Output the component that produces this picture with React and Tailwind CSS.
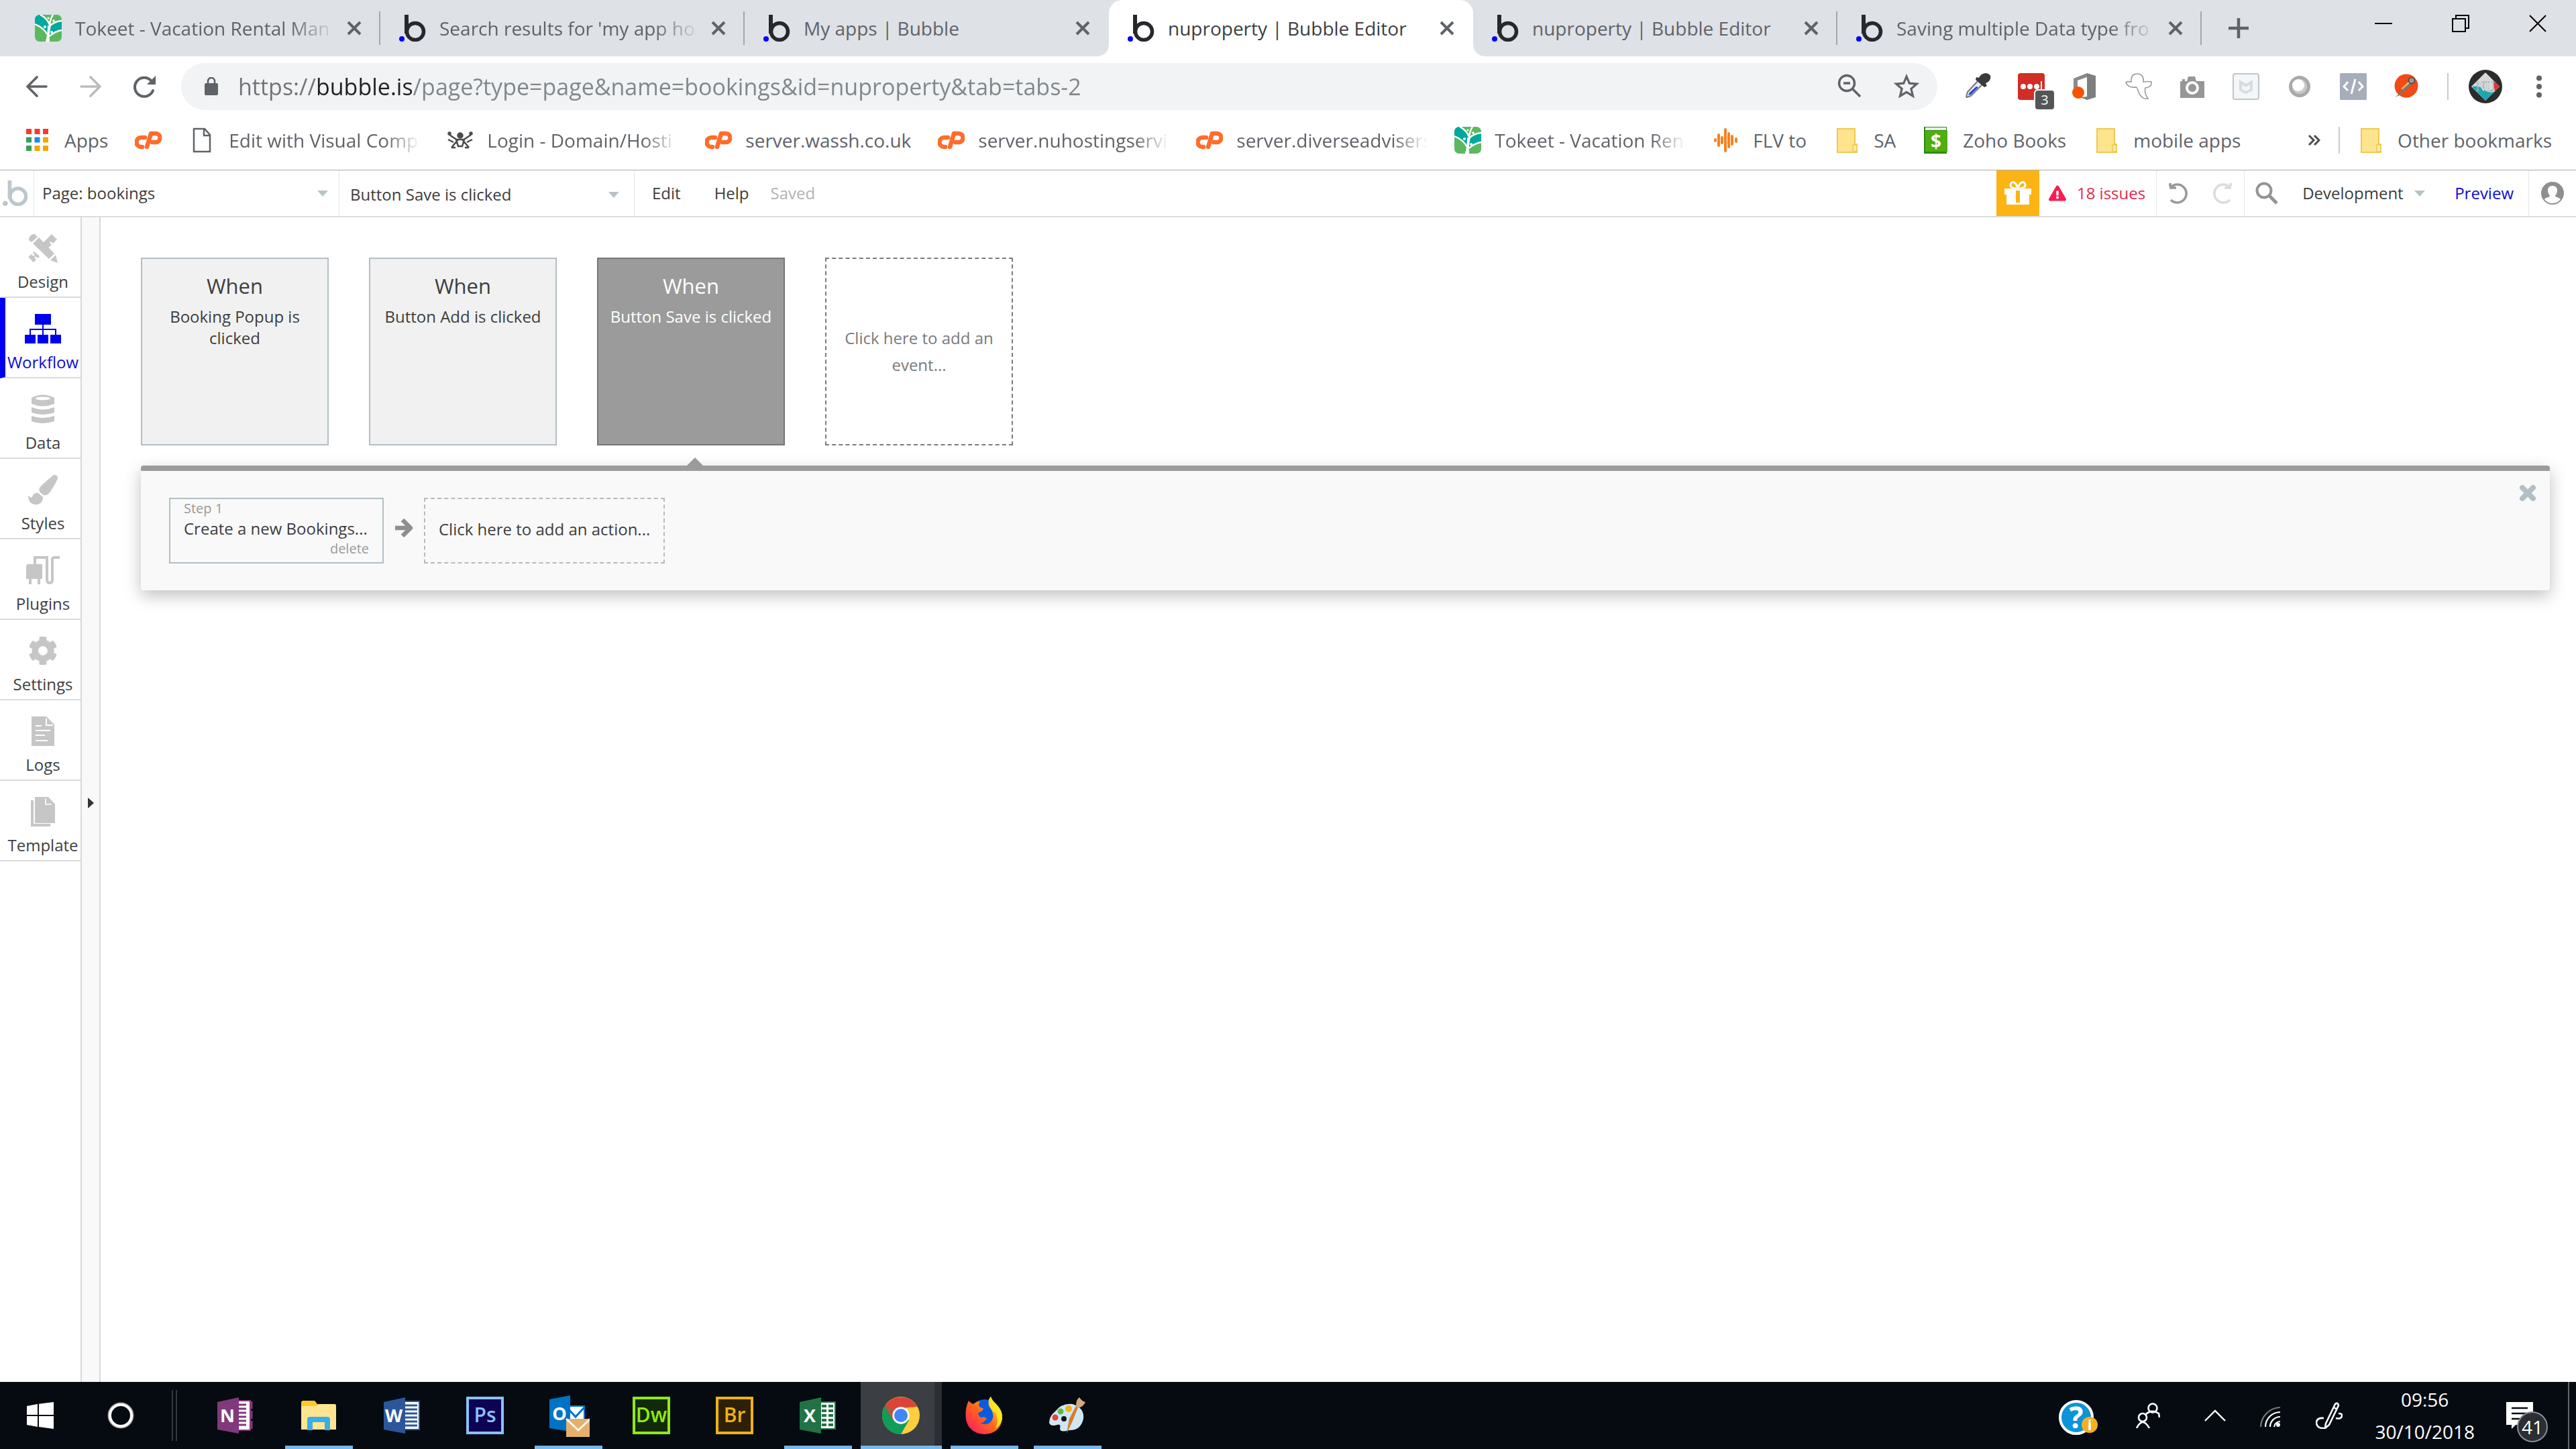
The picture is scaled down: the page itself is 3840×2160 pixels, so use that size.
import { FaCog, FaExclamationTriangle, FaPaintBrush } from "react-icons/fa";

const BubbleLogo = ({ className = "size-10", ink = "#27282b", dot = "#0000ff" }) => (
  <svg viewBox="0 0 40 40" className={className} aria-hidden="true">
    <rect x="8" y="0" width="6" height="28" fill={ink} />
    <circle cx="24" cy="25" r="12.5" fill="none" stroke={ink} strokeWidth="5.5" />
    <circle cx="4" cy="36" r="4" fill={dot} />
  </svg>
);

const TokeetLogo = () => (
  <svg viewBox="0 0 40 40" className="size-10" aria-hidden="true">
    <defs>
      <clipPath id="tokeet-clip">
        <rect width="40" height="40" rx="7" />
      </clipPath>
    </defs>
    <g clipPath="url(#tokeet-clip)">
      <rect width="40" height="40" fill="#5cb85f" />
      <path d="M0 14V4q4-4 8-4q10 6 13 14l-1 16Q10 18 0 14zM22 16Q29 10 40 9v14q-10 3-19 9z" fill="#00a99d" />
      <path d="M0 14Q13 19 19 30M8 0Q18 5 22 15Q23 6 27 0M22 17Q29 10 40 9M22 32Q29 25 40 23" fill="none" stroke="#fff" strokeWidth="2.4" />
      <path d="M16 40q3-11 3-24h5q-3 12-2 24z" fill="#fff" />
      <circle cx="15" cy="18" r="2" fill="#fff" />
      <circle cx="25" cy="26" r="2" fill="#fff" />
      <circle cx="20" cy="5" r="1.5" fill="#fff" />
      <circle cx="28" cy="9" r="1.8" fill="#fff" />
    </g>
  </svg>
);

const CpanelLogo = () => (
  <svg viewBox="0 0 40 40" className="size-10" aria-hidden="true" fill="none" stroke="#ff6c2c" strokeWidth="6.5" strokeLinecap="round" strokeLinejoin="round">
    <path d="M15 16h-5a7 7 0 0 0-1 14h2" />
    <path d="M18 30l6-20h7a6 6 0 0 1 0 13h-5" />
  </svg>
);

const PageIcon = () => (
  <svg viewBox="0 0 40 40" className="size-10" aria-hidden="true" fill="none" stroke="#5f6368" strokeWidth="2.5">
    <path d="M8 3h16l8 9v25H8zM23 3v10h9" />
  </svg>
);

const LoginIcon = () => (
  <svg viewBox="0 0 40 40" className="size-10" aria-hidden="true" fill="none" stroke="#4a4a4a" strokeWidth="2.5">
    <circle cx="20" cy="13" r="3.5" fill="#4a4a4a" />
    <circle cx="4" cy="10" r="1.5" />
    <circle cx="36" cy="10" r="1.5" />
    <path d="M4 12l12 8-9 11M36 12l-12 8 9 11M14 19h12l-3 10h-6zM2 19l8 4M38 19l-8 4M7 31h6M27 31h6" />
  </svg>
);

const AppsIcon = () => {
  const colors = ["#f43b2f", "#f43b2f", "#f43b2f", "#34a05a", "#1e88f5", "#f4a500", "#34a05a", "#f4a500", "#f4a500"];
  return (
    <svg viewBox="0 0 40 40" className="size-10" aria-hidden="true">
      {colors.map((color, i) => (
        <rect key={i} x={3 + (i % 3) * 12.5} y={3 + Math.floor(i / 3) * 12.5} width="8" height="8" fill={color} />
      ))}
    </svg>
  );
};

const FlvIcon = () => (
  <svg viewBox="0 0 40 40" className="size-10" aria-hidden="true" stroke="#f58220" strokeWidth="4" strokeLinecap="round">
    <path d="M4 19v2M9 12v16M14 16v8M19 4v32M24 10v20M29 14v12M35 18v4" />
  </svg>
);

const FolderIcon = () => (
  <svg viewBox="0 0 40 40" className="size-10" aria-hidden="true">
    <path d="M6 3h26v23h3v12H6z" fill="#ffe48f" stroke="#eec94f" strokeWidth="2" />
    <path d="M29 37V27h6v10z" fill="#ffe9a6" stroke="#eec94f" strokeWidth="1.5" />
  </svg>
);

const ZohoIcon = () => (
  <svg viewBox="0 0 40 40" className="size-10" aria-hidden="true">
    <path d="M2 0h34v40H2z" fill="#2c8a12" />
    <path d="M4 1h31v4H4z" fill="#e5f5dc" />
    <path d="M4 6h33v31H4z" fill="#4fae10" />
    <text x="20" y="32" textAnchor="middle" fontSize="28" fontWeight="700" fill="#fff" className="font-['Open_Sans',sans-serif]">$</text>
  </svg>
);

const Caret = () => (
  <svg viewBox="0 0 16 9" className="pointer-events-none h-[9px] w-4 shrink-0" aria-hidden="true">
    <path d="M0 0h16L8 9z" fill="#b8c3c8" />
  </svg>
);

const tabs = [
  { title: "Tokeet - Vacation Rental Man", icon: "tokeet", faded: true, separator: true },
  { title: "Search results for 'my app ho", faded: true, separator: true },
  { title: "My apps | Bubble" },
  { title: "nuproperty | Bubble Editor", active: true },
  { title: "nuproperty | Bubble Editor", separator: true },
  { title: "Saving multiple Data type fro", faded: true, separator: true },
];

const Tab = ({ tab }) => (
  <div className={`relative flex h-[84px] min-w-0 max-w-[543px] flex-1 items-center pl-7 ${tab.active ? "rounded-t-[20px] bg-white text-[#3c4043]" : "text-[#5f6368]"}`}>
    {tab.active && (
      <>
        <svg viewBox="0 0 20 20" className="absolute -left-5 bottom-0 size-5" aria-hidden="true">
          <path d="M20 0v20H0Q20 20 20 0z" fill="#fff" />
        </svg>
        <svg viewBox="0 0 20 20" className="absolute -right-5 bottom-0 size-5" aria-hidden="true">
          <path d="M0 0v20h20Q0 20 0 0z" fill="#fff" />
        </svg>
      </>
    )}
    <button className="flex min-w-0 flex-1 items-center gap-5 text-left">
      <span className="shrink-0">{tab.icon === "tokeet" ? <TokeetLogo /> : <BubbleLogo />}</span>
      <span className={`flex-1 whitespace-nowrap ${tab.faded ? "[mask-image:linear-gradient(to_right,black_82%,transparent)]" : ""}`}>{tab.title}</span>
    </button>
    <button aria-label="Close tab" className="ml-4 shrink-0">
      <svg viewBox="0 0 22 22" className="size-[22px]" stroke="#5f6368" strokeWidth="4">
        <path d="M2 2l18 18M20 2L2 20" />
      </svg>
    </button>
    <span className={`ml-[26px] h-[50px] w-0.5 shrink-0 ${tab.separator ? "bg-[#a4a7ab]" : ""}`} />
  </div>
);

const TabStrip = () => (
  <div className="flex items-center bg-[#dee1e6] pl-6">
    {tabs.map((tab, i) => (
      <Tab key={i} tab={tab} />
    ))}
    <button aria-label="New tab" className="ml-10 shrink-0">
      <svg viewBox="0 0 30 30" className="size-[30px]" stroke="#5f6368" strokeWidth="4.5">
        <path d="M15 0v30M0 15h30" />
      </svg>
    </button>
    <div className="ml-auto flex h-[70px] self-start">
      <button aria-label="Minimize" className="flex w-[115px] items-center justify-center">
        <svg viewBox="0 0 26 26" className="size-[26px]"><path d="M0 12h26v2H0z" /></svg>
      </button>
      <button aria-label="Restore" className="flex w-[115px] items-center justify-center">
        <svg viewBox="0 0 26 26" className="size-[26px]" fill="none" stroke="#000" strokeWidth="2">
          <path d="M1 6h19v19H1zM6 6V1h19v19h-5" />
        </svg>
      </button>
      <button aria-label="Close window" className="flex w-[115px] items-center justify-center">
        <svg viewBox="0 0 26 26" className="size-[26px]" stroke="#000" strokeWidth="2">
          <path d="M1 1l24 24M25 1L1 25" />
        </svg>
      </button>
    </div>
  </div>
);

const extensions = [
  {
    name: "Color picker",
    icon: (
      <svg viewBox="0 0 40 40" className="size-10">
        <path d="M3 35l2-7 16-17 6 6-17 17-6 2z" fill="#e8eaf0" stroke="#777" strokeWidth="2" />
        <path d="M6 33l2-4 10-9 3 1-11 11z" fill="#2747d0" />
        <path d="M18 6l4 1q3-7 11-7 8 2 6 8-1 5-7 7l2 4-4 2L17 10z" fill="#3a3a3a" />
      </svg>
    ),
  },
  {
    name: "LastPass",
    badge: "3",
    icon: (
      <svg viewBox="0 0 40 40" className="size-10">
        <rect width="40" height="40" rx="4" fill="#d32d27" />
        <circle cx="8" cy="20" r="4" fill="#fff" />
        <circle cx="18" cy="20" r="4" fill="#fff" />
        <circle cx="28" cy="20" r="4" fill="#fff" />
        <path d="M34 12h2v16h-2z" fill="#fff" />
      </svg>
    ),
  },
  {
    name: "Office",
    icon: (
      <svg viewBox="0 0 40 40" className="size-10">
        <path d="M3 8l20-8v6L9 11v12H3z" fill="#8b8b8b" />
        <path d="M23 0l13 4v32l-13 4-10-4 10-1z" fill="#7f7f7f" />
        <circle cx="10" cy="29" r="9" fill="#f65400" />
      </svg>
    ),
  },
  {
    name: "Ghostery",
    icon: (
      <svg viewBox="0 0 40 40" className="size-10" fill="#fff" stroke="#999" strokeWidth="1.6">
        <path d="M9 13Q8 1 18 1q10 0 9 12 8-1 12 0 1 8-9 9-2 8 4 16-10 2-15-12-1-5-3-5Q4 22 1 14q3-2 8-1z" />
      </svg>
    ),
  },
  {
    name: "Screenshot",
    icon: (
      <svg viewBox="0 0 40 40" className="size-10">
        <path d="M2 12h3V9h4v3h3l2-7h10l2 7h12v25H2z" fill="#969696" />
        <circle cx="20" cy="22" r="8" fill="#969696" stroke="#fff" strokeWidth="4" />
      </svg>
    ),
  },
  {
    name: "McAfee",
    icon: (
      <svg viewBox="0 0 40 40" className="size-10">
        <rect x="1" y="1" width="38" height="38" rx="3" fill="#f4f6f7" stroke="#bcc6cb" strokeWidth="2" />
        <path d="M10 10l10 6 10-6v16l-10 5-10-5zM14 17v7l6 3 6-3v-7l-6 4z" fill="#d5dcdf" fillRule="evenodd" />
      </svg>
    ),
  },
  {
    name: "Ring",
    icon: (
      <svg viewBox="0 0 40 40" className="size-10">
        <circle cx="20" cy="20" r="16" fill="#a9a9a9" />
        <circle cx="20" cy="20" r="11" fill="#c9c9c9" />
        <circle cx="18" cy="18" r="9" fill="#fff" />
      </svg>
    ),
  },
  {
    name: "Source",
    icon: (
      <svg viewBox="0 0 40 40" className="size-10" fill="none" stroke="#fff" strokeWidth="3">
        <rect width="40" height="40" rx="2" fill="#a6adbb" stroke="none" />
        <path d="M12 13l-6 7 6 6M28 13l6 7-6 6M23 9l-6 22" />
      </svg>
    ),
  },
  {
    name: "Postman",
    icon: (
      <svg viewBox="0 0 40 40" className="size-10">
        <circle cx="19" cy="19" r="17.5" fill="#f04a16" />
        <path d="M2 36l4-3L25 13l3 3L9 33z" fill="#777" />
        <path d="M11 23l13-12 2 2-12 11z" fill="#ffb25c" />
        <circle cx="27" cy="11" r="4.5" fill="#999" stroke="#444" strokeWidth="1.5" />
      </svg>
    ),
  },
];

const Toolbar = () => (
  <div className="flex h-[90px] items-center pl-[15px] pr-[50px]">
    <button aria-label="Back" className="flex size-20 items-center justify-center">
      <svg viewBox="0 0 32 32" className="size-8" fill="none" stroke="#5f6368" strokeWidth="3.6" strokeLinecap="round">
        <path d="M16 2L2 16l14 14M2 16h28" />
      </svg>
    </button>
    <button aria-label="Forward" className="flex size-20 items-center justify-center">
      <svg viewBox="0 0 32 32" className="size-8" fill="none" stroke="#babcbe" strokeWidth="3.6" strokeLinecap="round">
        <path d="M16 2l14 14-14 14M30 16H2" />
      </svg>
    </button>
    <button aria-label="Reload" className="flex size-20 items-center justify-center">
      <svg viewBox="0 0 34 34" className="size-[34px]" fill="none" stroke="#5f6368" strokeWidth="4" strokeLinecap="round">
        <path d="M27 8A14 14 0 1 0 30 23" />
        <path d="M34 1v13H21z" fill="#5f6368" stroke="none" />
      </svg>
    </button>
    <div className="ml-[15px] flex h-[70px] flex-1 items-center rounded-full bg-[#f1f3f4] pl-[35px] pr-[26px]">
      <svg viewBox="0 0 20 28" className="mr-[30px] h-7 w-5" aria-hidden="true">
        <rect y="9" width="20" height="18" rx="2" fill="#5f6368" />
        <path d="M5 10V6a5 5 0 0 1 10 0v4" fill="none" stroke="#5f6368" strokeWidth="2.6" />
      </svg>
      <input
        aria-label="Address"
        defaultValue="https://bubble.is/page?type=page&name=bookings&id=nuproperty&tab=tabs-2"
        className="min-w-0 flex-1 bg-[linear-gradient(to_right,#6f7377_116px,#202124_116px,#202124_261px,#80868b_261px)] bg-clip-text text-[34px] text-transparent outline-none"
      />
      <button aria-label="Zoom">
        <svg viewBox="0 0 40 40" className="size-10" fill="none" stroke="#5f6368" strokeWidth="3.4">
          <circle cx="16" cy="15" r="11.5" />
          <path d="M25 24l11 11M11 15h10" />
        </svg>
      </button>
      <button aria-label="Bookmark" className="ml-[45px]">
        <svg viewBox="0 0 40 40" className="size-10" fill="none" stroke="#5f6368" strokeWidth="3.2">
          <path d="M20 5l4.300 10.200 11 .9-8.400 7.200 2.600 10.800L20 28.300l-9.500 5.800 2.600-10.800-8.400-7.200 11-.9z" />
        </svg>
      </button>
    </div>
    <div className="ml-10 flex items-center gap-10">
      {extensions.map((ext) => (
        <button key={ext.name} aria-label={ext.name} className="relative">
          {ext.icon}
          {ext.badge && (
            <span className="absolute -bottom-4 -right-4 flex h-8 w-8 items-center justify-center rounded-md border-2 border-white bg-[#555] text-[20px] text-white">{ext.badge}</span>
          )}
        </button>
      ))}
      <span className="h-10 w-0.5 bg-[#c9cbce]" />
    </div>
    <button aria-label="Profile" className="ml-[30px]">
      <svg viewBox="0 0 50 50" className="size-[50px]">
        <circle cx="25" cy="25" r="25" fill="#2c2c2c" />
        <path d="M25 4l21 21-21 21L4 25z" fill="#d8d8d8" />
        <path d="M5 25q12-2 20 6 9 6 17-1L25 46z" fill="#1ea7b0" />
        <path d="M37 16l9 9-7 7q-2-8-2-16z" fill="#e0343c" />
        <text x="25" y="32" textAnchor="middle" fontSize="20" fill="#fff" stroke="#8a9aa0" strokeWidth="0.6" className="font-['Liberation_Serif',serif]">NU</text>
      </svg>
    </button>
    <button aria-label="Menu" className="ml-[50px]">
      <svg viewBox="0 0 10 34" className="h-[34px] w-2.5" fill="#5f6368">
        <circle cx="5" cy="4.500" r="4" />
        <circle cx="5" cy="17" r="4" />
        <circle cx="5" cy="29.500" r="4" />
      </svg>
    </button>
  </div>
);

const bookmarks = [
  { label: "Apps", icon: <AppsIcon /> },
  { icon: <CpanelLogo /> },
  { label: "Edit with Visual Comp", icon: <PageIcon />, faded: true },
  { label: "Login - Domain/Hosti", icon: <LoginIcon />, faded: true },
  { label: "server.wassh.co.uk", icon: <CpanelLogo /> },
  { label: "server.nuhostingservi", icon: <CpanelLogo />, faded: true },
  { label: "server.diverseadvisers", icon: <CpanelLogo />, faded: true },
  { label: "Tokeet - Vacation Ren", icon: <TokeetLogo />, faded: true },
  { label: "FLV to", icon: <FlvIcon /> },
  { label: "SA", icon: <FolderIcon /> },
  { label: "Zoho Books", icon: <ZohoIcon /> },
  { label: "mobile apps", icon: <FolderIcon /> },
];

const BookmarksBar = () => (
  <div className="flex h-20 items-center border-b border-[#a9abae] pb-[9px] pl-9 pr-9 text-[#5f6368]">
    <div className="flex items-center gap-10">
      {bookmarks.map((mark, i) => (
        <a key={i} href="#" aria-label={mark.label ?? "cPanel"} className="flex items-center gap-5 whitespace-nowrap">
          {mark.icon}
          {mark.label && (
            <span className={mark.faded ? "w-[285px] [mask-image:linear-gradient(to_right,black_82%,transparent)]" : ""}>{mark.label}</span>
          )}
        </a>
      ))}
    </div>
    <button aria-label="More bookmarks" className="ml-auto">
      <svg viewBox="0 0 18 16" className="h-4 w-[18px]" fill="none" stroke="#4a4d51" strokeWidth="3">
        <path d="M1 1l7 7-7 7M9 1l7 7-7 7" />
      </svg>
    </button>
    <span className="ml-[27px] h-10 w-0.5 bg-[#c9cbce]" />
    <a href="#" className="ml-[26px] flex items-center gap-5 whitespace-nowrap">
      <FolderIcon />
      Other bookmarks
    </a>
  </div>
);

const EditorBar = () => (
  <header className="flex h-[70px] items-stretch border-b-2 border-[#dcdcdc] text-[24px] text-[#3d3d3d]">
    <a href="#" aria-label="Bubble home" className="flex w-[51px] items-center justify-center border-r border-[#e3e7e9] pr-1">
      <BubbleLogo className="size-[38px]" ink="#bcc6cb" dot="#bcc6cb" />
    </a>
    <div className="flex w-[455px] items-center border-r border-[#e3e7e9] pl-3 pr-4">
      <select aria-label="Page" className="min-w-0 flex-1 appearance-none bg-transparent outline-none">
        <option>Page: bookings</option>
      </select>
      <Caret />
    </div>
    <div className="flex w-[440px] items-center border-r border-[#e3e7e9] pl-4 pr-[22px] pt-1">
      <select aria-label="Event" className="min-w-0 flex-1 appearance-none bg-transparent outline-none">
        <option>Button Save is clicked</option>
      </select>
      <Caret />
    </div>
    <button className="ml-[26px]">Edit</button>
    <button className="ml-[50px]">Help</button>
    <span className="ml-8 self-center text-[#b2b2b2]">Saved</span>
    <button aria-label="Gift" className="ml-auto flex w-16 items-center justify-center bg-[#fcb415]">
      <svg viewBox="0 0 40 38" className="h-[38px] w-10" fill="#fff">
        <path d="M0 12h17v24H3V21H0zM23 12h17v9h-3v15H23z" />
        <path d="M17 12h6v3h-6zM17 33h6v3h-6z" />
        <path d="M20 12Q8 12 9 6q2-6 7-2 3 3 4 8 1-5 4-8 5-4 7 2 1 6-11 6z" fill="none" stroke="#fff" strokeWidth="3" />
      </svg>
    </button>
    <button className="flex items-center gap-4 border-r border-[#e3e7e9] pl-[14px] pr-4 text-[#e4284f]">
      <FaExclamationTriangle className="size-[26px] text-[#fb1c50]" />
      18 issues
    </button>
    <div className="flex w-[131px] items-center justify-center gap-8 border-r border-[#e3e7e9]">
      <button aria-label="Undo">
        <svg viewBox="0 0 32 32" className="size-8" fill="none" stroke="#999" strokeWidth="3.600">
          <path d="M3 6v-5M4 7A13.500 13.500 0 1 1 4 26M2 8h10" />
        </svg>
      </button>
      <button aria-label="Redo">
        <svg viewBox="0 0 32 32" className="size-8" fill="none" stroke="#dcdcdc" strokeWidth="3.600">
          <path d="M29 6v-5M28 7A13.500 13.500 0 1 0 28 26M30 8H20" />
        </svg>
      </button>
    </div>
    <button aria-label="Search" className="ml-4 self-center">
      <svg viewBox="0 0 34 34" className="size-[34px]" fill="none" stroke="#949494" strokeWidth="4">
        <circle cx="13" cy="13" r="10.500" />
        <path d="M21 21l11 11" strokeWidth="5" />
      </svg>
    </button>
    <div className="ml-9 flex items-center gap-4">
      <select aria-label="Version" className="appearance-none bg-transparent outline-none">
        <option>Development</option>
      </select>
      <Caret />
    </div>
    <a href="#" className="ml-11 flex items-center border-r border-[#e3e7e9] pr-[22px] text-[#0c0cd8]">Preview</a>
    <button aria-label="Account" className="px-[18px]">
      <svg viewBox="0 0 34 34" className="size-[34px]">
        <circle cx="17" cy="17" r="17" fill="#8f8f8f" />
        <path d="M17 6c5 0 7 3 7 7 0 4-2 6-3 8 0 2 6 2 8 5-3 4-7 6-12 6s-9-2-12-6c2-3 8-3 8-5-1-2-3-4-3-8 0-4 2-7 7-7z" fill="#fff" />
      </svg>
    </button>
  </header>
);

const navItems = [
  {
    label: "Design",
    icon: (
      <svg viewBox="0 0 44 44" className="size-11" fill="#c6c6c6">
        <path d="M35 1l8 8-6 6-3-3-2 2 3 3-6 5-8-7zM9 27l8 7-3 3-3-3-2 2 3 3-4 4-8-8 5-4 3 3 2-2-3-3z" />
        <path d="M1 8q0-3 3-5 3-3 6-2l4 4-9 8-4-3zM16 6l23 24-8 8L7 15zM41 32l3 12-11-4z" />
      </svg>
    ),
  },
  {
    label: "Workflow",
    active: true,
    icon: (
      <svg viewBox="0 0 54 44" className="h-11 w-[54px]" fill="#0000f0">
        <path d="M15 0h24v16H15zM0 31h16v13H0zM19 31h16v13H19zM38 31h16v13H38z" />
        <path d="M27 16v15M8 31v-8h38v8" fill="none" stroke="#0000f0" strokeWidth="2" />
      </svg>
    ),
  },
  {
    label: "Data",
    icon: (
      <svg viewBox="0 0 36 44" className="h-11 w-9" fill="#c6c6c6">
        <path d="M1 5q17-9 34 0v9q-17 7-34 0zM1 19q17 7 34 0v8q-17 6-34 0zM1 32q17 6 34 0v8q-17 6-34 0z" />
        <ellipse cx="18" cy="6" rx="11" ry="2.600" fill="#fff" />
      </svg>
    ),
  },
  { label: "Styles", icon: <FaPaintBrush className="size-11" /> },
  {
    label: "Plugins",
    icon: (
      <svg viewBox="0 0 52 44" className="h-11 w-[52px]" fill="#c6c6c6">
        <path d="M3 13h22v22h-3v8h-4v-8H9v8H5v-8H1V15z" />
        <path d="M14 14V3h18v33q0 5 4 5t4-5V6q0-3 4-3h7" fill="none" stroke="#c6c6c6" strokeWidth="4" />
      </svg>
    ),
  },
  { label: "Settings", icon: <FaCog className="size-11" /> },
  {
    label: "Logs",
    icon: (
      <svg viewBox="0 0 34 44" className="h-11 w-[34px]">
        <path d="M0 0h22l12 12v32H0z" fill="#c6c6c6" />
        <path d="M22 3v10h10M6 14h9M6 21h22M6 28h14M6 36h18" fill="none" stroke="#fff" strokeWidth="2" />
      </svg>
    ),
  },
  {
    label: "Template",
    icon: (
      <svg viewBox="0 0 36 44" className="h-11 w-9">
        <path d="M0 5h4v35h25v4H0zM6 0h20l10 11v28H6z" fill="#c6c6c6" />
        <path d="M22 2v9h9" fill="none" stroke="#fff" strokeWidth="1.600" />
      </svg>
    ),
  },
];

const Sidebar = () => (
  <nav className="w-[122px] shrink-0 border-r-2 border-[#d9d9d9] text-[24px] leading-8">
    {navItems.map((item) => (
      <button
        key={item.label}
        className={`flex h-[120px] w-full flex-col items-center border-b-2 border-[#dadada] pt-6 ${item.active ? "border-l-8 border-l-[#0000f0] text-[#0c0cd8]" : "pl-2 text-[#404040]"}`}
      >
        <span className={item.active ? "" : "text-[#c6c6c6]"}>{item.icon}</span>
        <span className="mt-3">{item.label}</span>
      </button>
    ))}
  </nav>
);

const events = [
  { name: "Booking Popup is clicked" },
  { name: "Button Add is clicked" },
  { name: "Button Save is clicked", active: true },
];

const EventCard = ({ event }) => (
  <button
    className={`flex size-[280px] flex-col items-center border-2 px-4 pt-[18px] ${event.active ? "border-[#757575] bg-[#9b9b9b] text-white" : "border-[#b2bfc3] bg-[#f1f1f1] text-[#3d3d3d]"}`}
  >
    <span className="text-[31px] leading-[44px]">When</span>
    <span className="mt-2 leading-8">{event.name}</span>
  </button>
);

const Workflow = () => (
  <main className="min-w-0 flex-1 pb-10 pl-[60px] pr-[39px] pt-[60px] text-[24px]">
    <div className="flex gap-[60px]">
      {events.map((event) => (
        <EventCard key={event.name} event={event} />
      ))}
      <button className="size-[280px] border-2 border-dashed border-[#7b7b7b] px-5 leading-10 text-[#7b7b7b]">Click here to add an event...</button>
    </div>
    <section className="relative mt-[30px] flex items-start rounded-sm border-t-8 border-[#9b9b9b] bg-[#f9f9f9] pb-10 pl-[42px] pr-5 pt-10 shadow-[0_8px_24px_rgba(0,0,0,0.25)]">
      <svg viewBox="0 0 26 13" className="absolute -top-5 left-[813px] h-[13px] w-[26px]" aria-hidden="true">
        <path d="M0 13L13 0l13 13z" fill="#9b9b9b" />
      </svg>
      <div className="flex w-[320px] flex-col border-2 border-[#b2bfc3] px-5 pb-1.5">
        <span className="text-[20px] leading-7 text-[#999]">Step 1</span>
        <button className="text-left leading-8 whitespace-nowrap text-[#3d3d3d]">Create a new Bookings...</button>
        <button className="self-end text-[20px] leading-7 text-[#999]">delete</button>
      </div>
      <svg viewBox="0 0 28 30" className="mx-4 mt-[30px] h-[30px] w-7" fill="none" stroke="#8f8f8f" strokeWidth="6.500" aria-hidden="true">
        <path d="M1 15h22M12 3l12 12-12 12" strokeLinejoin="round" />
      </svg>
      <button className="h-[98px] border-2 border-dashed border-[#b2bcc0] px-5 pb-1 text-[#3d3d3d]">Click here to add an action...</button>
      <button aria-label="Close workflow" className="-mt-5 ml-auto">
        <svg viewBox="0 0 26 26" className="size-[26px]" stroke="#b2bfc3" strokeWidth="8" strokeLinecap="round">
          <path d="M5 5l16 16M21 5L5 21" />
        </svg>
      </button>
    </section>
  </main>
);

const OfficeIcon = ({ letter, color, children }) => (
  <svg viewBox="0 0 56 56" className="size-14" aria-hidden="true">
    {children}
    <path d="M1 8L33 1v54L1 49z" fill={color} />
    <text x="16" y="38" textAnchor="middle" fontSize="27" fontWeight="700" fill="#fff" className="font-['Open_Sans',sans-serif]">{letter}</text>
  </svg>
);

const AdobeIcon = ({ label, color, fill }) => (
  <svg viewBox="0 0 56 56" className="size-14" aria-hidden="true">
    <rect x="2" y="2" width="52" height="52" fill={fill} stroke={color} strokeWidth="4" />
    <text x="28" y="38" textAnchor="middle" fontSize="30" fontWeight="600" fill={color} className="font-['Open_Sans',sans-serif]">{label}</text>
  </svg>
);

const taskApps = [
  {
    name: "OneNote",
    icon: (
      <OfficeIcon letter="N" color="#80397b">
        <path d="M30 6h20v44H30z" fill="#fff" stroke="#80397b" strokeWidth="2" />
        <path d="M33 12h11M33 18h11M33 24h11M33 30h11M33 36h11M33 42h11M52 7v11M52 21v12M52 36v12" stroke="#80397b" strokeWidth="3" />
      </OfficeIcon>
    ),
  },
  {
    name: "File Explorer",
    open: true,
    icon: (
      <svg viewBox="0 0 56 56" className="size-14" aria-hidden="true">
        <path d="M2 9q0-3 3-3h17l4 5v8H2z" fill="#ffca28" />
        <path d="M2 14h22l3-3h25q2 0 2 3v35H2z" fill="#ffe591" />
        <path d="M11 50V34q0-4 4-4h26q4 0 4 4v16h-8V38H19v12z" fill="#35b0e8" />
      </svg>
    ),
  },
  {
    name: "Word",
    icon: (
      <OfficeIcon letter="W" color="#2b579a">
        <path d="M30 7h24v42H30z" fill="#fff" stroke="#2b579a" strokeWidth="2" />
        <path d="M33 13h18M33 19h18M33 25h18M33 31h18M33 37h18M33 43h18" stroke="#2b579a" strokeWidth="3" />
      </OfficeIcon>
    ),
  },
  { name: "Photoshop", icon: <AdobeIcon label="Ps" color="#8cc0fb" fill="#0c0353" /> },
  {
    name: "Outlook",
    open: true,
    icon: (
      <svg viewBox="0 0 64 72" className="mt-2 h-[72px] w-16" aria-hidden="true">
        <path d="M30 18h26v26H30z" fill="#fff" stroke="#0072c6" strokeWidth="2" />
        <path d="M30 20l13 14 13-14" fill="none" stroke="#0072c6" strokeWidth="3" />
        <path d="M4 8l31-6v54L4 51z" fill="#0072c6" />
        <text x="19" y="39" textAnchor="middle" fontSize="27" fontWeight="700" fill="#fff" className="font-['Open_Sans',sans-serif]">O</text>
        <path d="M29 37h36v27H29z" fill="#e6b06c" />
        <path d="M29 37l18 17 18-17" fill="none" stroke="#fff" strokeWidth="2.500" />
      </svg>
    ),
  },
  { name: "Dreamweaver", icon: <AdobeIcon label="Dw" color="#8fea10" fill="#112a0a" /> },
  { name: "Bridge", icon: <AdobeIcon label="Br" color="#eeb30e" fill="#2e2007" /> },
  {
    name: "Excel",
    open: true,
    icon: (
      <OfficeIcon letter="X" color="#217346">
        <path d="M30 8h24v40H30z" fill="#fff" stroke="#217346" strokeWidth="2" />
        <path d="M34 14h7M34 21h7M34 28h7M34 35h7M34 42h7M44 14h7M44 21h7M44 28h7M44 35h7M44 42h7" stroke="#217346" strokeWidth="4" />
      </OfficeIcon>
    ),
  },
  {
    name: "Chrome",
    open: true,
    active: true,
    icon: (
      <svg viewBox="0 0 56 56" className="size-14" aria-hidden="true">
        <circle cx="28" cy="28" r="28" fill="#ffcd40" />
        <path d="M28 28L4 14A28 28 0 0 1 52.500 15H28z" fill="#db4437" />
        <path d="M28 28L4 13.500A28 28 0 0 0 28 56l12-21z" fill="#0f9d58" />
        <path d="M28 15h24.500L28 17zM16 34L4 14l15 10z" fill="#db4437" />
        <circle cx="28" cy="28" r="12.700" fill="#fff" />
        <circle cx="28" cy="28" r="10" fill="#4285f4" />
      </svg>
    ),
  },
  {
    name: "Firefox",
    open: true,
    icon: (
      <svg viewBox="0 0 56 56" className="size-14" aria-hidden="true">
        <defs>
          <linearGradient id="fox-body" x1="0" y1="1" x2="1" y2="0">
            <stop offset="0.100" stopColor="#ff1f5e" />
            <stop offset="0.500" stopColor="#ff6a18" />
            <stop offset="0.900" stopColor="#ffe226" />
          </linearGradient>
        </defs>
        <circle cx="29" cy="27" r="23" fill="#0a5be0" />
        <path d="M5 6q3 4 7 5 4-4 10-4-3 4-1 8l6 3q-1 4-8 6 1 6 5 7 5-2 8 2-4 5-9 7 14 4 18-8 2-8-6-18Q33 4 38 0q2 6 8 11 10 10 9 22-3 22-27 23Q5 54 1 34-1 18 5 6z" fill="url(#fox-body)" />
        <path d="M38 0q2 6 8 11 10 10 9 22-3 10-10 14 6-12 0-22Q31 14 38 0z" fill="#ffe226" />
      </svg>
    ),
  },
  {
    name: "Paint",
    open: true,
    icon: (
      <svg viewBox="0 0 56 56" className="size-14" aria-hidden="true">
        <path d="M10 22Q20 9 36 11q18 6 16 22-4 18-22 17-12 4-13-2 2-8-4-6-10 3-12-3 0-10 9-17z" fill="#cfe6f3" />
        <circle cx="10" cy="31" r="4.500" fill="#e0433a" />
        <circle cx="18" cy="22" r="4.500" fill="#63b845" />
        <circle cx="30" cy="18" r="5" fill="#f6b21c" />
        <circle cx="23" cy="33" r="4" fill="#10141a" />
        <path d="M27 55l4-22 10-19 3 2-8 20z" fill="#d97b28" />
        <path d="M41 14q0-10 5-13 4 6 9 7-3 7-11 9z" fill="#d3aa7d" />
      </svg>
    ),
  },
];

const TaskButton = ({ app }) => (
  <div className="flex w-[124px] justify-center">
    <button aria-label={app.name} className={`flex h-full flex-col ${app.active ? "w-[121px] bg-[linear-gradient(to_right,#3b3e42_110px,#2b2e33_110px)]" : "w-[101px]"}`}>
      <span className="flex flex-1 items-center justify-center pt-[5px]">{app.icon}</span>
      <span className={`h-[5px] w-full ${app.open ? "bg-[#76b9ed]" : ""}`} />
    </button>
  </div>
);

const Taskbar = () => (
  <footer className="flex h-[100px] items-stretch bg-[#060b12] text-white">
    <button aria-label="Start" className="flex w-[120px] items-center justify-center">
      <svg viewBox="0 0 40 40" className="size-10" fill="#fff">
        <path d="M0 6l16-3v16H0zM18 2.700L40 0v19H18zM0 21h16v16L0 34zM18 21h22v19l-22-3z" />
      </svg>
    </button>
    <button aria-label="Cortana" className="flex w-[120px] items-center justify-center">
      <svg viewBox="0 0 40 40" className="size-10" fill="none">
        <circle cx="20" cy="20" r="18" stroke="#999" strokeWidth="3" />
        <circle cx="20" cy="20" r="16" stroke="#fff" strokeWidth="4" />
      </svg>
    </button>
    <span className="ml-4 h-[76px] w-2 self-center border-x-2 border-[#33373d]" />
    <div className="ml-[25px] flex">
      {taskApps.map((app) => (
        <TaskButton key={app.name} app={app} />
      ))}
    </div>
    <div className="ml-auto flex items-center">
      <button aria-label="Help" className="pt-1.5">
        <svg viewBox="0 0 58 54" className="h-[54px] w-[58px]">
          <circle cx="26" cy="27" r="24" fill="#0d94d8" stroke="#fff" strokeWidth="4" />
          <text x="26" y="43" textAnchor="middle" fontSize="44" fontWeight="700" fill="#fff" className="font-['Open_Sans',sans-serif]">?</text>
          <circle cx="46" cy="38" r="12" fill="#f5b021" />
          <text x="46" y="46" textAnchor="middle" fontSize="22" fontWeight="700" fill="#fff" className="font-['Open_Sans',sans-serif]">i</text>
        </svg>
      </button>
      <button aria-label="People" className="ml-[57px]">
        <svg viewBox="0 0 36 38" className="h-[38px] w-9" fill="none" stroke="#fff" strokeWidth="2.600">
          <circle cx="25" cy="8" r="6.500" />
          <circle cx="10" cy="22" r="6" />
          <path d="M14 18q9-9 20-2l1 6M1 38q9-18 19 0" />
        </svg>
      </button>
      <button aria-label="Show hidden icons" className="ml-[66px]">
        <svg viewBox="0 0 32 18" className="h-[18px] w-8" fill="none" stroke="#fff" strokeWidth="2.400">
          <path d="M1 17L16 2l15 15" />
        </svg>
      </button>
      <button aria-label="Network" className="ml-[50px] pt-1">
        <svg viewBox="0 0 32 32" className="size-8" fill="none" stroke="#fff" strokeWidth="2.200">
          <path d="M2 31A30 30 0 0 1 31 2" stroke="#777" />
          <path d="M9 31A22 22 0 0 1 31 9M16 31a15 15 0 0 1 15-15" />
          <path d="M22 31a9 9 0 0 1 9-8" />
          <circle cx="28" cy="28" r="3" fill="#fff" stroke="none" />
        </svg>
      </button>
      <button aria-label="Windows Ink" className="ml-[52px]">
        <svg viewBox="0 0 40 40" className="size-10" fill="none" stroke="#fff" strokeWidth="2.600">
          <path d="M15 32L29 3q4-3 5 2L20 34l-6 5zM27 8l5 3M14 39Q1 40 1 30q1-7 11-6M34 17q6 0 5 4-1 5-9 3" />
        </svg>
      </button>
      <div className="ml-12 text-center leading-[48px]">
        <div>09:56</div>
        <div>30/10/2018</div>
      </div>
      <button aria-label="Notifications" className="relative ml-[47px]">
        <svg viewBox="0 0 40 40" className="size-10">
          <path d="M0 0h40v34H14l-6 6v-6H0z" fill="#fff" />
          <path d="M8 9h24M8 17h24M8 25h16" stroke="#060b12" strokeWidth="2.500" />
        </svg>
        <span className="absolute -bottom-5 left-4 flex size-[46px] items-center justify-center rounded-full border-2 border-[#8b8d90] bg-[#2b2e32]">41</span>
      </button>
      <span className="ml-[52px] mr-2.5 h-[100px] w-0.5 bg-[#62656a]" />
    </div>
  </footer>
);

const App = () => (
  <div className="flex min-h-screen flex-col bg-white font-['Open_Sans',sans-serif] text-[28px]">
    <TabStrip />
    <Toolbar />
    <BookmarksBar />
    <EditorBar />
    <div className="flex flex-1">
      <Sidebar />
      <button aria-label="Expand sidebar" className="flex w-7 shrink-0 items-center justify-center border-r-2 border-[#d9d9d9] bg-[#f9f9f9] pt-2.5">
        <svg viewBox="0 0 9 16" className="h-4 w-[9px]" fill="#333"><path d="M0 0l9 8-9 8z" /></svg>
      </button>
      <Workflow />
    </div>
    <Taskbar />
  </div>
);

export default App;
